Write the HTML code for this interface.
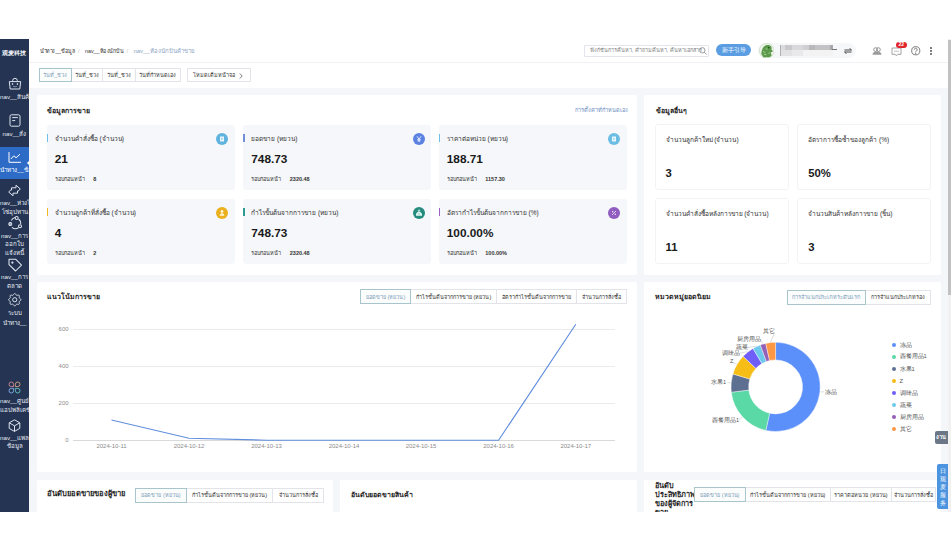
<!DOCTYPE html>
<html><head><meta charset="utf-8">
<style>
*{box-sizing:border-box;margin:0;padding:0}
html,body{width:951px;height:551px;overflow:hidden;background:#fff;font-family:"Liberation Sans",sans-serif;color:#262626}
.a{position:absolute;white-space:nowrap}
#scr{position:absolute;left:0;top:39px;width:951px;height:473px;overflow:hidden;background:#f5f6fa}
#side{position:absolute;left:0;top:0;width:29px;height:473px;background:#243452;color:#e6eaf2;font-size:6.2px;overflow:hidden}
#side .l{position:absolute;left:0;width:29px;text-align:center;line-height:8px;white-space:nowrap}
#side svg{position:absolute;overflow:visible}
#hdr{position:absolute;left:29px;top:0;width:922px;height:24px;background:#fff;border-bottom:1px solid #f0f1f4}
#tabs{position:absolute;left:29px;top:24px;width:922px;height:25px;background:#fff}
.pan{position:absolute;background:#fff;border-radius:2px;overflow:hidden}
.pt{position:absolute;font-size:7px;font-weight:bold;color:#1f1f1f;white-space:nowrap}
.card{position:absolute;background:#f5f7fa;border-radius:3px;width:188px;height:65.2px}
.card .bar{position:absolute;left:0;top:8.4px;width:1.3px;height:8.4px}
.card .lab{position:absolute;left:8px;top:9.5px;font-size:6.5px;line-height:8px;color:#333;white-space:nowrap}
.card .num{position:absolute;left:8px;top:27.6px;font-size:11.8px;line-height:12px;font-weight:bold;color:#1a1a1a;white-space:nowrap}
.card .prev{position:absolute;left:8px;top:50.4px;font-size:5.5px;line-height:6px;color:#333;white-space:nowrap}
.card .prev b{position:absolute;left:38.5px;top:0;font-size:5.5px}
.card .ic{position:absolute;right:6.7px;top:7.7px;width:12px;height:12px;border-radius:50%}
.oc{position:absolute;background:#fff;border:1px solid #f2f3f6;border-radius:3px;width:134px;height:66px}
.oc .lab{position:absolute;left:10px;top:11px;font-size:6.5px;line-height:8px;color:#333;white-space:nowrap}
.oc .num{position:absolute;left:10px;top:41.5px;font-size:11.3px;line-height:12px;font-weight:bold;color:#1a1a1a}
.btns{position:absolute;display:flex;height:15px;font-size:5.5px;white-space:nowrap}
.btns div{border:1px solid #e2e4e9;margin-left:-1px;display:flex;align-items:center;justify-content:center;background:#fff;color:#333;overflow:hidden}
.btns div.on{border-color:#a9c5cc;color:#7b9cb8;background:#fbfdfd;position:relative;z-index:1}
.gl{position:absolute;height:1px;background:#ebebeb}
.yl{position:absolute;font-size:6px;color:#8c8c8c;text-align:right;width:20px;line-height:6px}
.xl{position:absolute;font-size:6px;color:#8c8c8c;text-align:center;width:40px;line-height:6px}
.lg{position:absolute;left:0;font-size:5.8px;color:#555;line-height:8px;white-space:nowrap}
.lg i{display:inline-block;width:4px;height:4px;border-radius:50%;margin-left:1.5px;margin-right:4px;vertical-align:-.3px}
.pl{position:absolute;font-size:5.5px;color:#555;line-height:6px;white-space:nowrap}
</style></head><body>
<div id="scr">
  <!-- SIDEBAR -->
  <div id="side">
    <div class="l" style="top:9.5px;left:-1px;font-size:6px;color:#f4f6fa;font-weight:bold">观麦科技</div>
    <!-- bag -->
    <svg style="left:7.5px;top:37.5px" width="14" height="14" viewBox="0 0 14 14" fill="none" stroke="#dfe4ee" stroke-width="1" stroke-linejoin="round">
      <path d="M4.7 4.6V3.6a2.3 2.3 0 0 1 4.6 0v1"/><path d="M1.3 4.6h11.4l-.9 7.4H2.2z"/><circle cx="4.6" cy="7" r=".45" fill="#dfe4ee"/><circle cx="9.4" cy="7" r=".45" fill="#dfe4ee"/><path d="M5 9.3q2 1 4 0" stroke-width=".5"/>
    </svg>
    <div class="l" style="top:54px">nav__สินค้า</div>
    <!-- doc -->
    <svg style="left:9px;top:75px" width="12" height="13" viewBox="0 0 12 13" fill="none" stroke="#dfe4ee" stroke-width="1">
      <rect x="1" y="0.8" width="10" height="11.4" rx="1.5"/><path d="M3.2 3.6h5.6M3.2 6.6h3"/>
    </svg>
    <div class="l" style="top:90.5px">nav__สั่ง</div>
    <!-- active -->
    <div style="position:absolute;left:0;top:108px;width:29px;height:32px;background:#2d6bc7"></div>
    <svg style="left:8px;top:113px" width="13" height="11" viewBox="0 0 13 11" fill="none" stroke="#fff" stroke-width="1">
      <path d="M1 0v10.3h12"/><path d="M2.8 7l3-3.2 2.3 2 3.8-3.6"/>
    </svg>
    <div style="position:absolute;left:26.5px;top:121px;width:0;height:0;border-top:3px solid transparent;border-bottom:3px solid transparent;border-right:3px solid #fff"></div>
    <div class="l" style="top:127px;color:#fff">นำทาง__ข้อมูล</div>
    <!-- exchange -->
    <svg style="left:8px;top:144.5px" width="13" height="13" viewBox="0 0 13 13" fill="none" stroke="#dfe4ee" stroke-width="1" stroke-linejoin="round">
      <path d="M3.5 6.3V3.8H8V1.2L12.3 5 9.6 7.6"/><path d="M9.5 6.7v2.5H5v2.6L.7 8l2.7-2.6"/>
    </svg>
    <div class="l" style="top:159.5px">nav__ห่วงโซ่</div>
    <div class="l" style="top:168.5px">โซ่อุปทาน</div>
    <!-- nodes -->
    <svg style="left:7.5px;top:176.5px" width="14.5" height="14" viewBox="0 0 14.5 14" fill="none" stroke="#dfe4ee" stroke-width="1.05">
      <path d="M3.3 4.6A5.6 5.6 0 0 1 7 1.6M10.6 3a5.6 5.6 0 0 1 2 5.2M10.5 11.8a5.6 5.6 0 0 1-6.6-.4M2.3 9.6A5.6 5.6 0 0 1 2.2 6.3"/>
      <circle cx="8.7" cy="1.9" r="1.5"/><circle cx="2.3" cy="8" r="1.5"/><circle cx="12" cy="10.3" r="1.5"/>
    </svg>
    <div class="l" style="top:192.5px">nav__การ</div>
    <div class="l" style="top:201px">ออกใบ</div>
    <div class="l" style="top:209.5px">แจ้งหนี้</div>
    <!-- tag -->
    <svg style="left:7.5px;top:218.5px" width="14.5" height="14" viewBox="0 0 14.5 14" fill="none" stroke="#dfe4ee" stroke-width="1.05" stroke-linejoin="round">
      <path d="M1 1.2h6.6l5.9 5.9-5.9 5.9L1 6.6z"/><circle cx="4.4" cy="4.6" r=".6" fill="#dfe4ee"/>
    </svg>
    <div class="l" style="top:234px">nav__การ</div>
    <div class="l" style="top:242.5px">ตลาด</div>
    <!-- gear -->
    <svg style="left:7.75px;top:254.2px" width="13.5" height="13.5" viewBox="0 0 13.5 13.5" fill="none" stroke="#dfe4ee" stroke-width="1" stroke-linejoin="round">
      <path d="M12.95 6.75L12.88 7.07L12.69 7.37L12.40 7.64L12.06 7.88L11.72 8.08L11.44 8.27L11.25 8.48L11.15 8.71L11.15 8.99L11.21 9.32L11.30 9.71L11.37 10.11L11.39 10.51L11.31 10.86L11.13 11.13L10.86 11.31L10.51 11.39L10.11 11.37L9.71 11.30L9.33 11.21L8.99 11.15L8.71 11.15L8.48 11.25L8.27 11.44L8.08 11.72L7.88 12.06L7.64 12.40L7.37 12.69L7.07 12.88L6.75 12.95L6.43 12.88L6.13 12.69L5.86 12.40L5.62 12.06L5.42 11.72L5.23 11.44L5.02 11.25L4.79 11.15L4.51 11.15L4.18 11.21L3.79 11.30L3.39 11.37L2.99 11.39L2.64 11.31L2.37 11.13L2.19 10.86L2.11 10.51L2.13 10.11L2.20 9.71L2.29 9.32L2.35 8.99L2.35 8.71L2.25 8.48L2.06 8.27L1.78 8.08L1.44 7.88L1.10 7.64L0.81 7.37L0.62 7.07L0.55 6.75L0.62 6.43L0.81 6.13L1.10 5.86L1.44 5.62L1.78 5.42L2.06 5.23L2.25 5.02L2.35 4.79L2.35 4.51L2.29 4.18L2.20 3.79L2.13 3.39L2.11 2.99L2.19 2.64L2.37 2.37L2.64 2.19L2.99 2.11L3.39 2.13L3.79 2.20L4.17 2.29L4.51 2.35L4.79 2.35L5.02 2.25L5.23 2.06L5.42 1.78L5.62 1.44L5.86 1.10L6.13 0.81L6.43 0.62L6.75 0.55L7.07 0.62L7.37 0.81L7.64 1.10L7.88 1.44L8.08 1.78L8.27 2.06L8.48 2.25L8.71 2.35L8.99 2.35L9.33 2.29L9.71 2.20L10.11 2.13L10.51 2.11L10.86 2.19L11.13 2.37L11.31 2.64L11.39 2.99L11.37 3.39L11.30 3.79L11.21 4.18L11.15 4.51L11.15 4.79L11.25 5.02L11.44 5.23L11.72 5.42L12.06 5.62L12.40 5.86L12.69 6.13L12.88 6.43L12.95 6.75Z"/><circle cx="6.75" cy="6.75" r="2.1"/>
    </svg>
    <div class="l" style="top:270px">ระบบ</div>
    <div class="l" style="top:279.5px">นำทาง__</div>
    <!-- apps -->
    <svg style="left:8px;top:342px" width="13" height="13" viewBox="0 0 13 13" fill="none" stroke-width="1">
      <path d="M3.3 1A2.3 2.3 0 0 1 5.6 3.3V5.6H3.3A2.3 2.3 0 1 1 3.3 1z" stroke="#c8808f"/>
      <path d="M9.7 1A2.3 2.3 0 0 1 9.7 5.6H7.4V3.3A2.3 2.3 0 0 1 9.7 1z" stroke="#c99c7a"/>
      <path d="M3.3 12A2.3 2.3 0 0 1 3.3 7.4H5.6V9.7A2.3 2.3 0 0 1 3.3 12z" stroke="#7aa6dc"/>
      <path d="M9.7 12A2.3 2.3 0 0 1 7.4 9.7V7.4H9.7A2.3 2.3 0 1 1 9.7 12z" stroke="#5fbab9"/>
    </svg>
    <div class="l" style="top:358px">nav__ศูนย์</div>
    <div class="l" style="top:366.5px">แอปพลิเคชัน</div>
    <!-- cube -->
    <svg style="left:8px;top:379.5px" width="13" height="13" viewBox="0 0 13 13" fill="none" stroke="#dfe4ee" stroke-width="1" stroke-linejoin="round">
      <path d="M6.5 .8l5.3 3v5.6l-5.3 3-5.3-3V3.8z"/><path d="M1.2 3.8l5.3 3 5.3-3M6.5 6.8v5.6"/>
    </svg>
    <div class="l" style="top:394.5px">nav__แพลตฟอร์ม</div>
    <div class="l" style="top:403px">ข้อมูล</div>
  </div>

  <!-- HEADER -->
  <div id="hdr">
    <div class="a" style="left:11.4px;top:7.5px;font-size:6px;line-height:8px;color:#333;transform:scaleX(.89);transform-origin:0 0">นำทาง__ข้อมูล</div>
    <div class="a" style="left:49px;top:7.5px;font-size:6px;line-height:8px;color:#c0c0c0">/</div>
    <div class="a" style="left:55.7px;top:7.5px;font-size:6px;line-height:8px;color:#333;transform:scaleX(.89);transform-origin:0 0">nav__ห้องนักบิน</div>
    <div class="a" style="left:97.5px;top:7.5px;font-size:6px;line-height:8px;color:#c0c0c0">/</div>
    <div class="a" style="left:104.4px;top:7.5px;font-size:6px;line-height:8px;color:#8ea6c6">nav__ห้องนักบินค้าขาย</div>
    <div class="a" style="left:555.4px;top:5.6px;width:124.5px;height:12px;border:1px solid #e3e5ea;border-radius:1px;background:#fff"></div>
    <div class="a" style="left:560.6px;top:8px;font-size:5.5px;line-height:7px;color:#808080">ฟังก์ชันการค้นหา, คำถามค้นหา, ค้นหาเอกสาร</div>
    <svg class="a" style="left:670px;top:7.5px" width="8" height="8" viewBox="0 0 8 8" fill="none" stroke="#888" stroke-width=".8"><circle cx="3.3" cy="3.3" r="2.7"/><path d="M5.3 5.3L7.6 7.6"/></svg>
    <div class="a" style="left:687.3px;top:5.1px;width:34.5px;height:12.2px;border-radius:6.1px;background:#5a9de2;color:#fff;font-size:6px;line-height:12.2px;text-align:center">新手引导</div>
    <div class="a" style="left:729px;top:4px;width:98px;height:15px;border-radius:8px;background:#f6f7f9"></div>
    <svg class="a" style="left:729.6px;top:3.8px" width="15.5" height="15.5" viewBox="0 0 15 15"><circle cx="7.5" cy="7.5" r="7.2" fill="#eef4ea" stroke="#c5d6bd" stroke-width=".6"/><path d="M2.2 10.5c.2-3.5 1.5-6.8 4-8 2-.9 4.3-.5 5.5.8.9 1 .8 2.3.1 2.8l1.2 1.2c.5.6.3 1.4-.4 1.5l-1.3.2.9 3.3L10 13.8H4.2z" fill="#5b9a4c"/><path d="M3.8 8.3l2.2.9M4.8 11l2.4.3M6.5 5.5l1.7.6M9 10l1.5-.5" stroke="#b4dc9c" stroke-width=".8"/><circle cx="9.4" cy="4.6" r=".7" fill="#1f3a18"/></svg>
    <div class="a" style="left:750.5px;top:5.5px;width:5.5px;height:5.5px;background:#dcdcde"></div><div class="a" style="left:756.0px;top:5.5px;width:6.5px;height:5.5px;background:#c9c9cc"></div><div class="a" style="left:762.5px;top:5.5px;width:11.0px;height:5.5px;background:#d9d9db"></div><div class="a" style="left:773.5px;top:5.5px;width:6.5px;height:5.5px;background:#d0d0d2"></div><div class="a" style="left:780.0px;top:5.5px;width:6.0px;height:5.5px;background:#b9b9bc"></div><div class="a" style="left:786.0px;top:5.5px;width:15.0px;height:5.5px;background:#c3c3c6"></div><div class="a" style="left:801.0px;top:5.5px;width:2.5px;height:5.5px;background:#a8a8ab"></div><div class="a" style="left:750.5px;top:11.0px;width:12.0px;height:5.5px;background:#e2e2e4"></div><div class="a" style="left:762.5px;top:11.0px;width:11.0px;height:5.5px;background:#e9e9eb"></div><div class="a" style="left:773.5px;top:11.0px;width:30.0px;height:5.5px;background:#f3f3f4"></div><div class="a" style="left:750.5px;top:5.5px;width:1.0px;height:11.0px;background:#b0b0b3"></div><div class="a" style="left:803.0px;top:10.2px;width:5.0px;height:0.7px;background:#777"></div>
    <svg class="a" style="left:815px;top:8.5px" width="8" height="6" viewBox="0 0 8 6" fill="none" stroke="#333" stroke-width=".9"><path d="M.5 2h7L5.5.3M7.5 4H.5l2 1.7"/></svg>
    <!-- people -->
    <svg class="a" style="left:842.5px;top:7.5px" width="10" height="8" viewBox="0 0 10 8"><circle cx="3.6" cy="2.6" r="1.9" fill="none" stroke="#888" stroke-width=".9"/><circle cx="6.4" cy="2.6" r="1.9" fill="none" stroke="#888" stroke-width=".9"/><path d="M.5 7.8c0-2 1.5-3 3-3h3c1.5 0 3 1 3 3z" fill="#9a9a9a"/></svg>
    <!-- msg -->
    <svg class="a" style="left:862px;top:7.5px" width="11" height="10" viewBox="0 0 11 10" fill="none" stroke="#999" stroke-width=".9"><path d="M1 1h9v6.3H6.5L5.3 8.8 4.2 7.3H1z"/><path d="M3 4.2h5" stroke-width=".6"/></svg>
    <div class="a" style="left:867px;top:3px;width:10.5px;height:5.5px;border-radius:3px;background:#e0262b;color:#fff;font-size:5px;line-height:5.5px;text-align:center;font-weight:bold">22</div>
    <!-- help -->
    <svg class="a" style="left:882px;top:7px" width="9.5" height="9.5" viewBox="0 0 10 10" fill="none" stroke="#666" stroke-width=".9"><circle cx="5" cy="5" r="4.3"/><path d="M3.5 3.9a1.5 1.5 0 1 1 2.2 1.3c-.5.3-.7.6-.7 1.1"/><circle cx="5" cy="7.5" r=".3" fill="#666"/></svg>
    <div class="a" style="left:901px;top:7.5px;width:2.2px;height:2px;background:#555;border-radius:1px"></div>
    <div class="a" style="left:901px;top:10.5px;width:2.2px;height:2px;background:#555;border-radius:1px"></div>
    <div class="a" style="left:901px;top:13.5px;width:2.2px;height:2px;background:#555;border-radius:1px"></div>
  </div>

  <!-- TABS -->
  <div id="tabs"></div>
  <div class="btns" style="left:39.2px;top:29.2px;height:14.3px;font-size:5.5px">
    <div class="on" style="width:32.4px;margin-left:0">วันที่_ช่วง</div>
    <div style="width:32.7px">วันที่_ช่วง</div>
    <div style="width:33.4px">วันที่_ช่วง</div>
    <div style="width:46.6px">วันที่กำหนดเอง</div>
  </div>
  <div class="btns" style="left:186.6px;top:29.2px;height:14.3px;font-size:5.5px;position:absolute">
    <div style="width:64.8px;margin-left:0;justify-content:flex-start;padding-left:5px">โหมดเต็มหน้าจอ<svg style="position:absolute;left:52px;top:4.5px" width="4" height="6" viewBox="0 0 4 6" fill="none" stroke="#444" stroke-width=".7"><path d="M.8.5L3.2 3 .8 5.5"/></svg></div>
  </div>

  <!-- PANEL 1 -->
  <div class="pan" style="left:36.5px;top:56px;width:600.5px;height:179.5px">
    <div class="pt" style="left:10.5px;top:11px;line-height:9px">ข้อมูลการขาย</div>
    <div class="a" style="left:538px;top:11.5px;font-size:5.5px;line-height:7px;color:#6a8cc0">การตั้งค่าที่กำหนดเอง</div>
    <div class="card" style="left:10.3px;top:30.3px"><div class="bar" style="background:#6ec1e4"></div><div class="lab">จำนวนคำสั่งซื้อ (จำนวน)</div><div class="num">21</div><div class="prev">รอบก่อนหน้า<b>8</b></div><div class="ic" style="background:#5fb3de"><svg width="12" height="12" viewBox="0 0 12 12" style="position:absolute;left:0;top:0"><rect x="4" y="3.5" width="4" height="5" fill="#e9f7fc"/><path d="M5 5.5h2M5 6.8h1.3" stroke="#5fb0dc" stroke-width=".5"/></svg></div></div>
    <div class="card" style="left:206.8px;top:30.3px"><div class="bar" style="background:#6f8fd8"></div><div class="lab">ยอดขาย (หยวน)</div><div class="num">748.73</div><div class="prev">รอบก่อนหน้า<b>2320.48</b></div><div class="ic" style="background:#5b82e0"><svg width="12" height="12" viewBox="0 0 12 12" style="position:absolute;left:0;top:0"><path d="M4 3.3L6 6l2-2.7M6 6v3M4.5 6.5h3M4.5 7.8h3" stroke="#eef3ff" stroke-width=".9" fill="none"/></svg></div></div>
    <div class="card" style="left:402.3px;top:30.3px"><div class="bar" style="background:#6ec1e4"></div><div class="lab">ราคาต่อหน่วย (หยวน)</div><div class="num">188.71</div><div class="prev">รอบก่อนหน้า<b>1157.30</b></div><div class="ic" style="background:#6bbde4"><svg width="12" height="12" viewBox="0 0 12 12" style="position:absolute;left:0;top:0"><rect x="4" y="3.5" width="4" height="5" fill="#e9f7fc"/><path d="M5 5.5h2M5 6.8h1.3" stroke="#6bbde4" stroke-width=".5"/></svg></div></div>
    <div class="card" style="left:10.3px;top:104.3px"><div class="bar" style="background:#f2b824"></div><div class="lab">จำนวนลูกค้าที่สั่งซื้อ (จำนวน)</div><div class="num">4</div><div class="prev">รอบก่อนหน้า<b>2</b></div><div class="ic" style="background:#ebb01e"><svg width="12" height="12" viewBox="0 0 12 12" style="position:absolute;left:0;top:0"><circle cx="6" cy="4.5" r="1.4" fill="#fff6d8"/><path d="M3.7 8.8c0-1.6 1-2.5 2.3-2.5s2.3.9 2.3 2.5z" fill="#fff6d8"/></svg></div></div>
    <div class="card" style="left:206.8px;top:104.3px"><div class="bar" style="background:#2a9d8f"></div><div class="lab">กำไรขั้นต้นจากการขาย (หยวน)</div><div class="num">748.73</div><div class="prev">รอบก่อนหน้า<b>2320.48</b></div><div class="ic" style="background:#248b7e"><svg width="12" height="12" viewBox="0 0 12 12" style="position:absolute;left:0;top:0"><path d="M5 3.2h2l-.6 1.2M5 3.2l.6 1.2" stroke="#dff7f3" stroke-width=".7" fill="none"/><path d="M5.4 4.6h1.2c1.5.9 2.5 2.2 2.5 3.3 0 .6-.4.8-1 .8H3.9c-.6 0-1-.2-1-.8 0-1.1 1-2.4 2.5-3.3z" fill="#dff7f3"/><rect x="5.6" y="6.5" width=".9" height=".9" fill="#2a9687"/></svg></div></div>
    <div class="card" style="left:402.3px;top:104.3px"><div class="bar" style="background:#9a5fc0"></div><div class="lab">อัตรากำไรขั้นต้นจากการขาย (%)</div><div class="num">100.00%</div><div class="prev">รอบก่อนหน้า<b>100.00%</b></div><div class="ic" style="background:#905cc0"><svg width="12" height="12" viewBox="0 0 12 12" style="position:absolute;left:0;top:0"><path d="M8 4L4 8" stroke="#f1e6fb" stroke-width=".8"/><rect x="4" y="4" width="1.3" height="1.3" fill="#e6d5f5"/><rect x="6.7" y="6.7" width="1.3" height="1.3" fill="#e6d5f5"/></svg></div></div>
  </div>

  <!-- PANEL 2 -->
  <div class="pan" style="left:643.5px;top:56px;width:297px;height:179.5px">
    <div class="pt" style="left:12px;top:11px;line-height:9px">ข้อมูลอื่นๆ</div>
    <div class="oc" style="left:11px;top:29.3px"><div class="lab">จำนวนลูกค้าใหม่ (จำนวน)</div><div class="num">3</div></div>
    <div class="oc" style="left:153.7px;top:29.3px"><div class="lab">อัตราการซื้อซ้ำของลูกค้า (%)</div><div class="num">50%</div></div>
    <div class="oc" style="left:11px;top:103px"><div class="lab">จำนวนคำสั่งซื้อหลังการขาย (จำนวน)</div><div class="num">11</div></div>
    <div class="oc" style="left:153.7px;top:103px"><div class="lab">จำนวนสินค้าหลังการขาย (ชิ้น)</div><div class="num">3</div></div>
  </div>

  <!-- PANEL 3 chart -->
  <div class="pan" style="left:36.5px;top:242.5px;width:600.5px;height:190.5px"></div>
  <div class="pt" style="left:47px;top:253px;line-height:9px">แนวโน้มการขาย</div>
  <div class="btns" style="left:360.3px;top:250.2px">
    <div class="on" style="width:50.8px;margin-left:0">ยอดขาย (หยวน)</div>
    <div style="width:87.2px">กำไรขั้นต้นจากการขาย (หยวน)</div>
    <div style="width:80.6px">อัตรากำไรขั้นต้นจากการขาย</div>
    <div style="width:51px">จำนวนการสั่งซื้อ</div>
  </div>
  <div class="gl" style="left:73.4px;top:290px;width:541.3px"></div>
  <div class="gl" style="left:73.4px;top:327px;width:541.3px"></div>
  <div class="gl" style="left:73.4px;top:364px;width:541.3px"></div>
  <div class="gl" style="left:73.4px;top:400.8px;width:541.3px;background:#d9d9d9"></div>
  <div class="yl" style="left:48.6px;top:287.3px">600</div>
  <div class="yl" style="left:48.6px;top:324.3px">400</div>
  <div class="yl" style="left:48.6px;top:361.3px">200</div>
  <div class="yl" style="left:48.6px;top:398.1px">0</div>
  <div class="xl" style="left:91.5px;top:404.3px">2024-10-11</div>
  <div class="xl" style="left:169px;top:404.3px">2024-10-12</div>
  <div class="xl" style="left:246.5px;top:404.3px">2024-10-13</div>
  <div class="xl" style="left:324px;top:404.3px">2024-10-14</div>
  <div class="xl" style="left:401px;top:404.3px">2024-10-15</div>
  <div class="xl" style="left:478.6px;top:404.3px">2024-10-16</div>
  <div class="xl" style="left:555.8px;top:404.3px">2024-10-17</div>
  <svg class="a" style="left:0;top:0" width="951" height="473"><polyline points="111.5,381 189,399.2 266.5,401.2 344,401.2 421,401.2 498.6,401.2 575.8,285.3" fill="none" stroke="#628fdc" stroke-width="1.15"/></svg>

  <!-- PANEL 4 pie -->
  <div class="pan" style="left:643.5px;top:242.5px;width:297px;height:190.5px"></div>
  <div class="pt" style="left:655px;top:253px;line-height:9px">หมวดหมู่ยอดนิยม</div>
  <div class="btns" style="left:787px;top:250.7px">
    <div class="on" style="width:78.7px;margin-left:0">การจำแนกประเภทระดับแรก</div>
    <div style="width:66.2px">การจำแนกประเภทรอง</div>
  </div>
  <svg id="pie" class="a" style="left:0;top:0" width="951" height="473"><path d="M775.60,303.30 A44.6 44.6 0 1 1 765.79,391.41 L769.66,374.24 A27 27 0 1 0 775.60,320.90 Z" fill="#5B8FF9" stroke="#fff" stroke-width=".4"/><path d="M765.79,391.41 A44.6 44.6 0 0 1 731.31,353.18 L748.79,351.10 A27 27 0 0 0 769.66,374.24 Z" fill="#5AD8A6" stroke="#fff" stroke-width=".4"/><path d="M731.31,353.18 A44.6 44.6 0 0 1 732.93,334.93 L749.77,340.05 A27 27 0 0 0 748.79,351.10 Z" fill="#5D7092" stroke="#fff" stroke-width=".4"/><path d="M732.93,334.93 A44.6 44.6 0 0 1 743.09,317.37 L755.92,329.42 A27 27 0 0 0 749.77,340.05 Z" fill="#F6BD16" stroke="#fff" stroke-width=".4"/><path d="M743.09,317.37 A44.6 44.6 0 0 1 753.03,309.43 L761.94,324.61 A27 27 0 0 0 755.92,329.42 Z" fill="#6F5EF9" stroke="#fff" stroke-width=".4"/><path d="M753.03,309.43 A44.6 44.6 0 0 1 760.35,305.99 L766.37,322.53 A27 27 0 0 0 761.94,324.61 Z" fill="#6DC8EC" stroke="#fff" stroke-width=".4"/><path d="M760.35,305.99 A44.6 44.6 0 0 1 765.72,304.41 L769.62,321.57 A27 27 0 0 0 766.37,322.53 Z" fill="#945FB9" stroke="#fff" stroke-width=".4"/><path d="M765.72,304.41 A44.6 44.6 0 0 1 775.60,303.30 L775.60,320.90 A27 27 0 0 0 769.62,321.57 Z" fill="#FF9845" stroke="#fff" stroke-width=".4"/><path d="M820.4 352.9L824.5 352.8" stroke="#bbb" stroke-width=".5" fill="none"/><path d="M742.1 378.1L739.0 380.5" stroke="#bbb" stroke-width=".5" fill="none"/><path d="M730.7 343.9L727.5 343.5" stroke="#bbb" stroke-width=".5" fill="none"/><path d="M736.6 325.3L732.0 323.5" stroke="#bbb" stroke-width=".5" fill="none"/><path d="M747.5 312.7L740.0 314.0" stroke="#bbb" stroke-width=".5" fill="none"/><path d="M756.4 307.1L748.0 308.5" stroke="#bbb" stroke-width=".5" fill="none"/><path d="M762.9 304.6L760.5 300.5" stroke="#bbb" stroke-width=".5" fill="none"/><path d="M770.6 303.1L774.5 294.0" stroke="#bbb" stroke-width=".5" fill="none"/></svg>
  <div class="pl" style="left:825.2px;top:349.8px">冻品</div>
  <div class="pl" style="left:712px;top:378.2px">西餐用品1</div>
  <div class="pl" style="left:711px;top:340px">水果1</div>
  <div class="pl" style="left:730px;top:319.4px">Z</div>
  <div class="pl" style="left:721.8px;top:310.7px">调味品</div>
  <div class="pl" style="left:736px;top:305.2px">蔬菜</div>
  <div class="pl" style="left:737px;top:297.2px">厨房用品</div>
  <div class="pl" style="left:763px;top:289.3px">其它</div>
  <div class="a" style="left:890px;top:301.5px">
    <div class="lg" style="top:0"><i style="background:#5B8FF9"></i>冻品</div>
    <div class="lg" style="top:11.8px"><i style="background:#5AD8A6"></i>西餐用品1</div>
    <div class="lg" style="top:24.2px"><i style="background:#5D7092"></i>水果1</div>
    <div class="lg" style="top:36.2px"><i style="background:#F6BD16"></i>Z</div>
    <div class="lg" style="top:48px"><i style="background:#6F5EF9"></i>调味品</div>
    <div class="lg" style="top:60px"><i style="background:#6DC8EC"></i>蔬菜</div>
    <div class="lg" style="top:72.4px"><i style="background:#945FB9"></i>厨房用品</div>
    <div class="lg" style="top:84.2px"><i style="background:#FF9845"></i>其它</div>
  </div>

  <!-- ROW 3 -->
  <div class="pan" style="left:36.5px;top:440.5px;width:296.5px;height:60px"></div>
  <div class="pt" style="left:47px;top:450.3px;font-size:7.6px;line-height:10px">อันดับยอดขายของผู้ขาย</div>
  <div class="btns" style="left:135px;top:448.5px">
    <div class="on" style="width:52px;margin-left:0">ยอดขาย (หยวน)</div>
    <div style="width:87px">กำไรขั้นต้นจากการขาย (หยวน)</div>
    <div style="width:52px">จำนวนการสั่งซื้อ</div>
  </div>
  <div class="pan" style="left:340px;top:440.5px;width:297px;height:60px"></div>
  <div class="pt" style="left:350.8px;top:450.8px;line-height:9px">อันดับยอดขายสินค้า</div>
  <div class="pan" style="left:643.5px;top:440.5px;width:297px;height:60px"></div>
  <div class="pt" style="left:655px;top:441.6px;line-height:9px;white-space:normal;width:40px;font-size:7.3px">อันดับ ประสิทธิภาพ ของผู้จัดการ ขาย</div>
  <div class="btns" style="left:694px;top:448.3px">
    <div class="on" style="width:51.5px;margin-left:0">ยอดขาย (หยวน)</div>
    <div style="width:86.5px">กำไรขั้นต้นจากการขาย (หยวน)</div>
    <div style="width:62.2px">ราคาต่อหน่วย (หยวน)</div>
    <div style="width:45px">จำนวนการสั่งซื้อ</div>
  </div>

  <!-- floating -->
  <div class="a" style="left:934.6px;top:392px;width:13px;height:12.6px;background:#6b7686;border-radius:2px 0 0 2px;color:#fff;font-size:5.6px;font-weight:bold;line-height:12.6px;text-align:center">งาน</div>
  <div class="a" style="left:937.4px;top:424.6px;width:11px;height:45.4px;background:#4d94e0;border-radius:2px 0 0 2px;color:#fff;font-size:6px;line-height:8px;text-align:center;padding-top:3px;white-space:normal">日<br>观<br>麦<br>服<br>务</div>

  <div class="a" style="left:948px;top:0;width:3px;height:473px;background:#f1f1f1"><div style="position:absolute;left:0;top:1px;width:3px;height:255px;background:#c1c1c1"></div></div>
</div>

</body></html>
